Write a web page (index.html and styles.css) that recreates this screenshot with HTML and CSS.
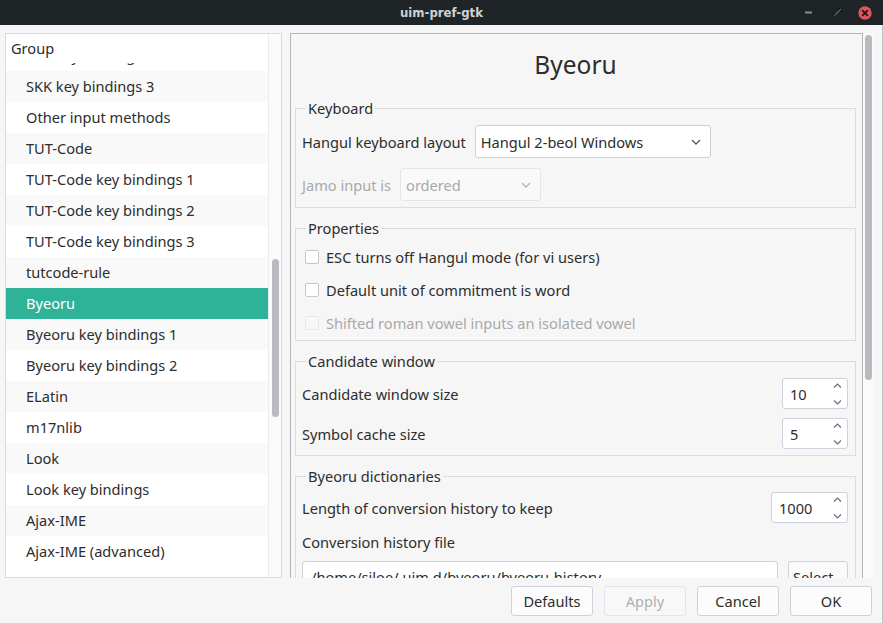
FILE: index.html
```html
<!DOCTYPE html>
<html>
<head>
<meta charset="utf-8">
<title>uim-pref-gtk</title>
<link rel="stylesheet" href="styles.css">
</head>
<body>
<div class="window">
  <header class="titlebar">
    <span class="title">uim-pref-gtk</span>
    <div class="wm-buttons">
      <span class="wm-btn"><svg width="8" height="3" viewBox="0 0 8 3"><rect x="0" y="0.5" width="7" height="2" fill="#8a8f91"/></svg></span>
      <span class="wm-btn"><svg width="9" height="9" viewBox="0 0 9 9"><path d="M4 0.5h4.5v4.5z M0.5 4v4.5h4.5z" fill="#0e1011"/><path d="M8 1L1 8" stroke="#5a5f61" stroke-width="1.4"/></svg></span>
      <span class="wm-btn"><svg width="14" height="14" viewBox="0 0 14 14"><circle cx="7" cy="7" r="6.7" fill="#e0555c"/><path d="M4.6 4.6l4.8 4.8M9.4 4.6l-4.8 4.8" stroke="#2a1416" stroke-width="1.8" stroke-linecap="round"/></svg></span>
    </div>
  </header>
  <div class="content">
    <div class="panes">
      <div class="group-pane">
        <div class="group-list">
          <div class="group-head">Group</div>
          <div class="group-rows">
            <div class="rows-inner">
              <div class="row">SKK key bindings 2</div>
              <div class="row alt">SKK key bindings 3</div>
              <div class="row">Other input methods</div>
              <div class="row alt">TUT-Code</div>
              <div class="row">TUT-Code key bindings 1</div>
              <div class="row alt">TUT-Code key bindings 2</div>
              <div class="row">TUT-Code key bindings 3</div>
              <div class="row alt">tutcode-rule</div>
              <div class="row sel">Byeoru</div>
              <div class="row alt">Byeoru key bindings 1</div>
              <div class="row">Byeoru key bindings 2</div>
              <div class="row alt">ELatin</div>
              <div class="row">m17nlib</div>
              <div class="row alt">Look</div>
              <div class="row">Look key bindings</div>
              <div class="row alt">Ajax-IME</div>
              <div class="row">Ajax-IME (advanced)</div>
            </div>
          </div>
        </div>
        <div class="vscroll"><div class="thumb thumb-left"></div></div>
      </div>
      <div class="pref-pane">
        <div class="viewport">
          <div class="page">
            <div class="page-title">Byeoru</div>

            <fieldset class="group g-keyboard">
              <legend>Keyboard</legend>
              <div class="form-row">
                <span>Hangul keyboard layout</span>
                <div class="combo combo-layout"><span>Hangul 2-beol Windows</span><svg class="chev" width="10" height="6" viewBox="0 0 10 6"><path d="M1 1l4 4 4-4" fill="none" stroke="#555b61" stroke-width="1.3"/></svg></div>
              </div>
              <div class="form-row disabled">
                <span>Jamo input is</span>
                <div class="combo combo-jamo"><span>ordered</span><svg class="chev" width="10" height="6" viewBox="0 0 10 6"><path d="M1 1l4 4 4-4" fill="none" stroke="#b0b3b8" stroke-width="1.3"/></svg></div>
              </div>
            </fieldset>

            <fieldset class="group g-props">
              <legend>Properties</legend>
              <div class="check-row"><span class="box"></span><span>ESC turns off Hangul mode (for vi users)</span></div>
              <div class="check-row"><span class="box"></span><span>Default unit of commitment is word</span></div>
              <div class="check-row disabled"><span class="box"></span><span>Shifted roman vowel inputs an isolated vowel</span></div>
            </fieldset>

            <fieldset class="group g-cand">
              <legend>Candidate window</legend>
              <div class="spin-row">
                <span>Candidate window size</span>
                <div class="spin"><span>10</span><span class="arrows"><svg width="9" height="5" viewBox="0 0 9 5"><path d="M1 4.5l3.5-3.5 3.5 3.5" fill="none" stroke="#6b7077" stroke-width="1.2"/></svg><svg width="9" height="5" viewBox="0 0 9 5"><path d="M1 0.5l3.5 3.5 3.5-3.5" fill="none" stroke="#6b7077" stroke-width="1.2"/></svg></span></div>
              </div>
              <div class="spin-row">
                <span>Symbol cache size</span>
                <div class="spin"><span>5</span><span class="arrows"><svg width="9" height="5" viewBox="0 0 9 5"><path d="M1 4.5l3.5-3.5 3.5 3.5" fill="none" stroke="#6b7077" stroke-width="1.2"/></svg><svg width="9" height="5" viewBox="0 0 9 5"><path d="M1 0.5l3.5 3.5 3.5-3.5" fill="none" stroke="#6b7077" stroke-width="1.2"/></svg></span></div>
              </div>
            </fieldset>

            <fieldset class="group g-dict">
              <legend>Byeoru dictionaries</legend>
              <div class="spin-row">
                <span>Length of conversion history to keep</span>
                <div class="spin spin-wide"><span>1000</span><span class="arrows"><svg width="9" height="5" viewBox="0 0 9 5"><path d="M1 4.5l3.5-3.5 3.5 3.5" fill="none" stroke="#6b7077" stroke-width="1.2"/></svg><svg width="9" height="5" viewBox="0 0 9 5"><path d="M1 0.5l3.5 3.5 3.5-3.5" fill="none" stroke="#6b7077" stroke-width="1.2"/></svg></span></div>
              </div>
              <div class="label-row">Conversion history file</div>
              <div class="file-row">
                <div class="entry">/home/siloe/.uim.d/byeoru/byeoru-history</div>
                <div class="select-btn">Select...</div>
              </div>
            </fieldset>
          </div>
        </div>
        <div class="vscroll2"><div class="thumb thumb-right"></div></div>
      </div>
    </div>
    <div class="footer">
      <div class="btn">Defaults</div>
      <div class="btn disabled">Apply</div>
      <div class="btn">Cancel</div>
      <div class="btn">OK</div>
    </div>
  </div>
</div>
</body>
</html>
```

FILE: styles.css
```css
* { box-sizing: border-box; }
html, body { margin: 0; padding: 0; }
body {
  width: 883px;
  height: 623px;
  overflow: hidden;
  background: #f6f6f6;
  font-family: "Noto Sans", sans-serif;
  font-size: 14.6px;
  color: #2d2d2d;
}
.window { width: 883px; height: 623px; display: flex; flex-direction: column; }

.titlebar {
  height: 25px;
  flex: none;
  background: #1f2426;
  display: grid;
  grid-template-columns: 1fr auto 1fr;
  align-items: center;
}
.title {
  grid-column: 2;
  color: #cdd2d4;
  font-family: "DejaVu Sans Condensed", "DejaVu Sans", sans-serif;
  font-weight: bold;
  font-size: 13px;
}
.wm-buttons {
  grid-column: 3;
  justify-self: end;
  display: flex;
  align-items: center;
  padding-right: 4px;
}
.wm-btn { width: 28px; height: 25px; display: flex; align-items: center; justify-content: center; }

.content {
  flex: 1;
  display: flex;
  flex-direction: column;
  padding: 8px 0 0 5px;
  border-right: 1px solid #c3c3c3;
}
.panes { display: flex; height: 545px; flex: none; }

.group-pane {
  width: 277px;
  border: 1px solid #d9d9d9;
  background: #fff;
  display: flex;
}
.group-list { width: 262px; display: flex; flex-direction: column; }
.group-head { height: 29px; line-height: 29px; padding-left: 5px; background: #fff; flex: none; }
.group-rows { flex: 1; overflow: hidden; }
.rows-inner { margin-top: -23px; }
.row { height: 31px; line-height: 31px; padding-left: 20px; white-space: nowrap; }
.row.alt { background: #f9f9f9; }
.row.sel { background: #2eb398; color: #fff; }
.vscroll { width: 13px; border-left: 1px solid #ececec; background: #fbfbfb; padding: 225px 0 0 3px; }
.thumb { background: #b9babf; border-radius: 4px; }
.thumb-left { width: 7px; height: 158px; }

.pref-pane { margin-left: 8px; display: flex; }
.viewport {
  width: 573px;
  border: 1px solid #b5b5b5;
  border-bottom: none;
  overflow: hidden;
}
.vscroll2 { width: 11px; background: #fafafa; padding: 2px 0 0 2px; }
.thumb-right { width: 7px; height: 345px; }

.page { padding: 16px 6px 0 4px; }
.page-title { text-align: center; font-size: 24.5px; line-height: 30px; margin-bottom: 18px; }

fieldset.group {
  margin: 0 0 10px;
  min-width: 0;
  border: 1px solid #dcdcdc;
  padding: 7px 7px 6px 6px;
}
fieldset.group legend { padding: 0 2px; margin-left: 4px; line-height: 20px; }

.form-row { display: flex; align-items: center; height: 33px; gap: 9px; }
.form-row + .form-row { margin-top: 10px; }
.disabled { color: #a9a9a9; }
.combo {
  height: 33px;
  border: 1px solid #cdd1dc;
  border-radius: 3px;
  background: #fff;
  display: flex;
  align-items: center;
  justify-content: space-between;
  padding: 0 9px 0 5px;
}
.combo-layout { width: 236px; }
.combo-jamo { width: 141px; background: #f9f9f9; border-color: #e3e5ea; padding-right: 9px; }

.g-props { padding-top: 2px !important; padding-bottom: 1px !important; }
.g-dict { padding-top: 6px !important; }
.check-row { display: flex; align-items: center; height: 33px; gap: 7px; padding-left: 3px; }
.box { width: 14px; height: 14px; border: 1px solid #c4c8d0; border-radius: 2px; background: #fff; flex: none; }
.check-row.disabled .box { border-color: #e6e7ea; background: #f8f8f8; }

.spin-row { display: flex; align-items: center; justify-content: space-between; height: 31px; }
.spin-row + .spin-row { margin-top: 9px; }
.spin {
  width: 66px;
  height: 31px;
  border: 1px solid #cdd1dc;
  border-radius: 3px;
  background: #fff;
  display: flex;
  align-items: center;
  justify-content: space-between;
  padding-left: 7px;
  padding-right: 5px;
}
.spin-wide { width: 77px; }
.arrows { height: 29px; display: flex; flex-direction: column; justify-content: space-between; padding: 3.5px 0 3px; }
.arrows svg { display: block; }

.label-row { height: 30px; line-height: 30px; margin-top: 4px; }
.file-row { display: flex; gap: 10px; margin-top: 4px; }
.entry {
  width: 476px;
  height: 33px;
  line-height: 31px;
  border: 1px solid #cdd1dc;
  border-radius: 3px;
  background: #fff;
  padding-left: 8px;
  white-space: nowrap;
  overflow: hidden;
}
.select-btn {
  width: 60px;
  height: 33px;
  line-height: 31px;
  border: 1px solid #cdd1dc;
  border-radius: 3px;
  background: #fafafa;
  padding-left: 4px;
  white-space: nowrap;
  overflow: hidden;
}

.footer {
  display: flex;
  justify-content: flex-end;
  gap: 11px;
  padding: 8px 10px 0 0;
}
.btn {
  width: 82px;
  height: 30px;
  line-height: 29px;
  text-align: center;
  border: 1px solid #cdd1dc;
  border-radius: 3px;
  background: #fcfcfc;
}
.btn.disabled { border-color: #e3e5ea; background: #f8f8f8; color: #b0b0b0; }
```
